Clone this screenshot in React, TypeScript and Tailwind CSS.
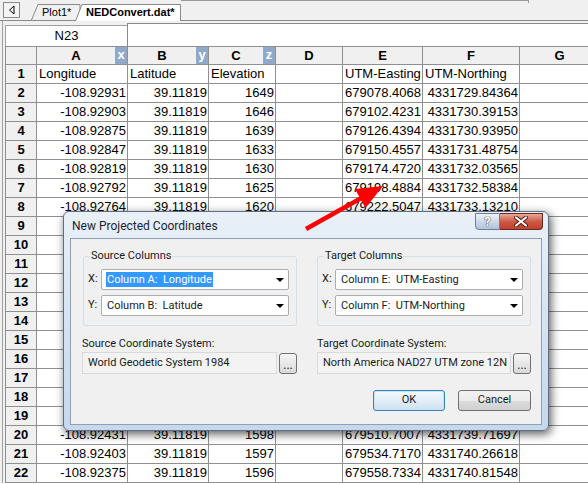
import React from "react";

type Col = { key: string; w: string; badge?: string };

const COLS: Col[] = [
  { key: "A", w: "w-[91px]", badge: "x" },
  { key: "B", w: "w-[81px]", badge: "y" },
  { key: "C", w: "w-[67px]", badge: "z" },
  { key: "D", w: "w-[67px]" },
  { key: "E", w: "w-[80px]" },
  { key: "F", w: "w-[97px]" },
  { key: "G", w: "w-[80px]" },
];

const EMPTY = ["", "", "", "", "", "", ""];

// rows 9-19 sit under the dialog, left blank
const ROWS: string[][] = [
  ["Longitude", "Latitude", "Elevation", "", "UTM-Easting", "UTM-Northing", ""],
  ["-108.92931", "39.11819", "1649", "", "679078.4068", "4331729.84364", ""],
  ["-108.92903", "39.11819", "1646", "", "679102.4231", "4331730.39153", ""],
  ["-108.92875", "39.11819", "1639", "", "679126.4394", "4331730.93950", ""],
  ["-108.92847", "39.11819", "1633", "", "679150.4557", "4331731.48754", ""],
  ["-108.92819", "39.11819", "1630", "", "679174.4720", "4331732.03565", ""],
  ["-108.92792", "39.11819", "1625", "", "679198.4884", "4331732.58384", ""],
  ["-108.92764", "39.11819", "1620", "", "679222.5047", "4331733.13210", ""],
  EMPTY, EMPTY, EMPTY, EMPTY, EMPTY, EMPTY, EMPTY, EMPTY, EMPTY, EMPTY, EMPTY,
  ["-108.92431", "39.11819", "1598", "", "679510.7007", "4331739.71697", ""],
  ["-108.92403", "39.11819", "1597", "", "679534.7170", "4331740.26618", ""],
  ["-108.92375", "39.11819", "1596", "", "679558.7334", "4331740.81548", ""],
];

function TabBar() {
  return (
    <div className="h-[21px] bg-[#f0f0f0] border-b border-[#8a8a8a] flex items-end relative">
      <div className="absolute left-[3px] top-[2px] w-[17px] h-[16px] border border-[#8a8a8a] bg-[#f4f4f4] flex items-center justify-center">
        <svg width="7" height="10" viewBox="0 0 7 10">
          <path d="M6 1 L1.5 5 L6 9 Z" fill="none" stroke="#000" strokeWidth="1" />
        </svg>
      </div>
      <div className="ml-[31px] relative h-[16px] w-[50px] text-[11px] leading-[16px]">
        <svg className="absolute inset-0" width="50" height="16" viewBox="0 0 50 16">
          <path d="M0.5 16 L7 0.5 L49 0.5 L49 16" fill="#f0f0f0" stroke="#8a8a8a" />
        </svg>
        <span className="relative pl-[11px]">Plot1*</span>
      </div>
      <div className="-ml-[6px] relative h-[16px] w-[106px] text-[11px] font-bold leading-[16px]">
        <svg className="absolute inset-0" width="106" height="17" viewBox="0 0 106 17">
          <path d="M0.5 17 L7 0.5 L105.5 0.5 L105.5 17" fill="#ffffff" stroke="#8a8a8a" />
        </svg>
        <span className="relative pl-[11px]">NEDConvert.dat*</span>
      </div>
      <div className="self-start w-[348px] h-[3px] border-t border-r border-[#9a9a9a]" />
    </div>
  );
}

function NameRow() {
  return (
    <div className="h-[25px] flex items-end">
      <div className="w-[122px] h-[21px] bg-white border-t border-l border-[#a0a0a0] flex items-center justify-center text-[13px]">
        N23
      </div>
      <div className="flex-1 h-[23px] bg-white border-t border-l border-[#8a8a8a]" />
    </div>
  );
}

function HeaderRow() {
  return (
    <div className="flex h-[19px]">
      <div className="w-[32px] shrink-0 border border-[#8f8f8f] bg-[#f0f0f0]" />
      {COLS.map((c) => (
        <div
          key={c.key}
          className={`${c.w} shrink-0 flex border-r border-b border-t border-[#8f8f8f] bg-[#f0f0f0] text-[13px] font-bold`}
        >
          <span className="flex-1 text-center leading-[17px]">{c.key}</span>
          {c.badge ? (
            <span className="w-[12px] bg-[#8fa9c9] text-white text-center leading-[16px] text-[13px]">
              {c.badge}
            </span>
          ) : null}
        </div>
      ))}
    </div>
  );
}

function DataRow({ n, cells }: { n: number; cells: string[] }) {
  const isLabel = n === 1;
  return (
    <div className="flex h-[19px]">
      <div className="w-[32px] shrink-0 border-l border-r border-b border-[#8f8f8f] bg-[#f0f0f0] text-center font-bold text-[13px] leading-[18px]">
        {n}
      </div>
      {COLS.map((c, i) => (
        <div
          key={c.key}
          className={`${c.w} shrink-0 border-r border-b border-[#8f8f8f] bg-white text-[13px] leading-[18px] whitespace-nowrap overflow-hidden ${
            isLabel ? "text-left pl-[2px]" : "text-right pr-[1px]"
          }`}
        >
          {cells[i]}
        </div>
      ))}
    </div>
  );
}

function Sheet() {
  return (
    <div className="pl-[2px] bg-[#f0f0f0]">
      <div className="border-l border-[#a0a0a0] pl-[2px] bg-[#f0f0f0]">
        <NameRow />
        <HeaderRow />
        {ROWS.map((r, i) => (
          <DataRow key={i} n={i + 1} cells={r} />
        ))}
      </div>
    </div>
  );
}

function DropArrow() {
  return (
    <svg width="8" height="4" viewBox="0 0 8 4">
      <path d="M0 0 L8 0 L4 4 Z" fill="#000" />
    </svg>
  );
}

function Combo({ label, value, selected }: { label: string; value: string; selected?: boolean }) {
  return (
    <div className="flex items-center h-[21px]">
      <span className="w-[13px] shrink-0">{label}</span>
      <div className="flex-1 h-[21px] border border-[#abadb3] bg-white rounded-[2px] flex items-center pl-[4px] pr-[4px]">
        <span
          className={`whitespace-pre px-[1px] leading-[15px] ${
            selected ? "bg-[#3399ff] text-white" : ""
          }`}
        >
          {value}
        </span>
        <span className="ml-auto">
          <DropArrow />
        </span>
      </div>
    </div>
  );
}

function GroupBox({
  title,
  rows,
}: {
  title: string;
  rows: { label: string; value: string; selected?: boolean }[];
}) {
  return (
    <div className="relative h-[70px] border border-[#d5dfe5] rounded-[3px] pt-[12px] pl-[4px] pr-[7px] flex flex-col gap-[5px]">
      <span className="absolute -top-[9px] left-[6px] bg-[#f0f0f0] px-[1px] leading-[16px]">
        {title}
      </span>
      {rows.map((r) => (
        <Combo key={r.label} {...r} />
      ))}
    </div>
  );
}

function CoordField({ label, value }: { label: string; value: string }) {
  return (
    <div className="flex flex-col">
      <span className="leading-[15px]">{label}</span>
      <div className="mt-[1px] flex gap-[2px] h-[22px]">
        <div className="flex-1 border border-[#d9d9d9] bg-[#f3f3f3] flex items-center pl-[5px] whitespace-nowrap overflow-hidden">
          {value}
        </div>
        <button className="w-[18px] h-[21px] mt-[1px] border border-[#707070] rounded-[3px] bg-linear-to-b from-[#f6f6f6] to-[#d9d9d9] flex items-end justify-center leading-[12px] text-[12px] pb-[2px]">
          ...
        </button>
      </div>
    </div>
  );
}

function Dialog() {
  return (
    <div className="absolute left-[63px] top-[211px] w-[486px] h-[220px] rounded-[6px] border border-[#5d6f88] bg-linear-to-b from-[#e9f0f8] via-[#d6e3f1] to-[#c6d8ec] shadow-[2px_3px_10px_rgba(0,0,0,0.65)] flex flex-col px-[6px] pb-[5px] font-['Roboto','Noto_Sans',sans-serif] text-[11px] text-[#1a1a1a]">
      <div className="h-[26px] flex items-start">
        <span className="pl-[2px] pt-[5px] text-[12px] text-[#1c2430]">New Projected Coordinates</span>
        <div className="ml-auto flex -mr-[1px] mt-[1px]">
          <div className="w-[25px] h-[17px] rounded-bl-[4px] border border-[#6c7d94] bg-linear-to-b from-[#eef3f9] via-[#cdd9e7] to-[#b3c4d9] flex items-center justify-center text-white font-bold text-[13px] leading-none [text-shadow:0_0_1px_#2c3a4c,0_0_1px_#2c3a4c]">
            ?
          </div>
          <div className="w-[43px] h-[17px] rounded-br-[4px] border border-l-0 border-[#6b2a20] bg-linear-to-b from-[#e9a99b] via-[#cc5a47] to-[#c0402c] flex items-center justify-center">
            <svg width="14" height="11" viewBox="0 0 14 11">
              <path d="M2 1.5 L12 9.5 M12 1.5 L2 9.5" stroke="#4a1a12" strokeWidth="4" strokeLinecap="round" />
              <path d="M2 1.5 L12 9.5 M12 1.5 L2 9.5" stroke="#ffffff" strokeWidth="2.2" strokeLinecap="round" />
            </svg>
          </div>
        </div>
      </div>
      <div className="flex-1 border border-[#8da0b8] bg-[#f0f0f0] flex flex-col">
        <div className="mt-[17px] pl-[12px] grid grid-cols-[214px_214px] gap-x-[20px]">
          <GroupBox
            title="Source Columns"
            rows={[
              { label: "X:", value: "Column A:  Longitude", selected: true },
              { label: "Y:", value: "Column B:  Latitude" },
            ]}
          />
          <GroupBox
            title="Target Columns"
            rows={[
              { label: "X:", value: "Column E:  UTM-Easting" },
              { label: "Y:", value: "Column F:  UTM-Northing" },
            ]}
          />
        </div>
        <div className="mt-[10px] pl-[11px] grid grid-cols-[215px_214px] gap-x-[20px]">
          <CoordField label="Source Coordinate System:" value="World Geodetic System 1984" />
          <CoordField label="Target Coordinate System:" value="North America NAD27 UTM zone 12N" />
        </div>
        <div className="mt-[16px] pr-[10px] flex justify-end gap-[13px]">
          <button className="w-[72px] h-[21px] rounded-[3px] border border-[#3c7fb1] bg-linear-to-b from-[#f3f8fc] via-[#e3eef8] to-[#cfe0ef] shadow-[inset_0_0_0_1px_#c4e5f6]">
            OK
          </button>
          <button className="w-[73px] h-[21px] rounded-[3px] border border-[#707070] bg-[linear-gradient(#f2f2f2,#ebebeb_50%,#dddddd_50%,#cfcfcf)]">
            Cancel
          </button>
        </div>
      </div>
    </div>
  );
}

function Arrow() {
  return (
    <svg className="absolute inset-0 pointer-events-none" width="588" height="484" viewBox="0 0 588 484">
      <line x1="306" y1="229" x2="365" y2="196" stroke="#ff0000" strokeWidth="4.5" />
      <polygon points="383,186 365.5,208 355,189" fill="#ff0000" />
    </svg>
  );
}

export default function App() {
  return (
    <div className="relative w-[588px] h-[484px] overflow-hidden bg-white font-['Liberation_Sans',Arial,sans-serif] text-black">
      <TabBar />
      <Sheet />
      <Dialog />
      <Arrow />
    </div>
  );
}
